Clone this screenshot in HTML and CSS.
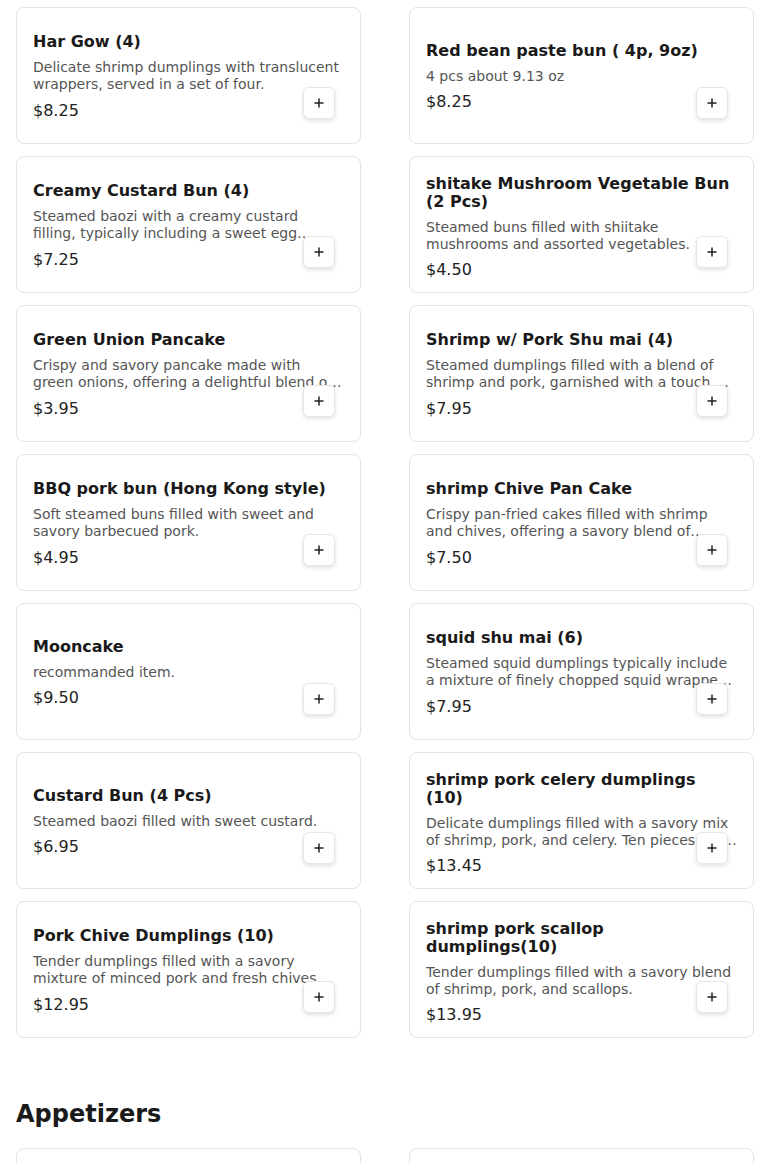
FILE: index.html
```html
<!DOCTYPE html>
<html lang="en">
<head>
<meta charset="utf-8">
<title>Menu</title>
<link rel="stylesheet" href="styles.css">
</head>
<body>
<main class="page">
  <section class="section">
    <div class="grid">
      <div class="card"><div class="info"><h3 class="name">Har Gow (4)</h3><p class="desc">Delicate shrimp dumplings with translucent wrappers, served in a set of four.</p><div class="price">$8.25</div></div><button class="add" aria-label="Add"><svg viewBox="0 0 10 10" width="10" height="10"><path d="M5 0.5v9M0.5 5h9" stroke="#222" stroke-width="1.5" fill="none"/></svg></button></div>
      <div class="card"><div class="info"><h3 class="name">Red bean paste bun ( 4p, 9oz)</h3><p class="desc">4 pcs about 9.13 oz</p><div class="price">$8.25</div></div><button class="add" aria-label="Add"><svg viewBox="0 0 10 10" width="10" height="10"><path d="M5 0.5v9M0.5 5h9" stroke="#222" stroke-width="1.5" fill="none"/></svg></button></div>
      <div class="card"><div class="info"><h3 class="name">Creamy Custard Bun (4)</h3><p class="desc">Steamed baozi with a creamy custard filling, typically including a sweet egg custard mixture.</p><div class="price">$7.25</div></div><button class="add" aria-label="Add"><svg viewBox="0 0 10 10" width="10" height="10"><path d="M5 0.5v9M0.5 5h9" stroke="#222" stroke-width="1.5" fill="none"/></svg></button></div>
      <div class="card"><div class="info"><h3 class="name">shitake Mushroom Vegetable Bun (2 Pcs)</h3><p class="desc">Steamed buns filled with shiitake mushrooms and assorted vegetables.</p><div class="price">$4.50</div></div><button class="add" aria-label="Add"><svg viewBox="0 0 10 10" width="10" height="10"><path d="M5 0.5v9M0.5 5h9" stroke="#222" stroke-width="1.5" fill="none"/></svg></button></div>
      <div class="card"><div class="info"><h3 class="name">Green Union Pancake</h3><p class="desc">Crispy and savory pancake made with green onions, offering a delightful blend of flavors and textures.</p><div class="price">$3.95</div></div><button class="add" aria-label="Add"><svg viewBox="0 0 10 10" width="10" height="10"><path d="M5 0.5v9M0.5 5h9" stroke="#222" stroke-width="1.5" fill="none"/></svg></button></div>
      <div class="card"><div class="info"><h3 class="name">Shrimp w/ Pork Shu mai (4)</h3><p class="desc">Steamed dumplings filled with a blend of shrimp and pork, garnished with a touch of roe.</p><div class="price">$7.95</div></div><button class="add" aria-label="Add"><svg viewBox="0 0 10 10" width="10" height="10"><path d="M5 0.5v9M0.5 5h9" stroke="#222" stroke-width="1.5" fill="none"/></svg></button></div>
      <div class="card"><div class="info"><h3 class="name">BBQ pork bun (Hong Kong style)</h3><p class="desc">Soft steamed buns filled with sweet and savory barbecued pork.</p><div class="price">$4.95</div></div><button class="add" aria-label="Add"><svg viewBox="0 0 10 10" width="10" height="10"><path d="M5 0.5v9M0.5 5h9" stroke="#222" stroke-width="1.5" fill="none"/></svg></button></div>
      <div class="card"><div class="info"><h3 class="name">shrimp Chive Pan Cake</h3><p class="desc">Crispy pan-fried cakes filled with shrimp and chives, offering a savory blend of flavors.</p><div class="price">$7.50</div></div><button class="add" aria-label="Add"><svg viewBox="0 0 10 10" width="10" height="10"><path d="M5 0.5v9M0.5 5h9" stroke="#222" stroke-width="1.5" fill="none"/></svg></button></div>
      <div class="card"><div class="info"><h3 class="name">Mooncake</h3><p class="desc">recommanded item.</p><div class="price">$9.50</div></div><button class="add" aria-label="Add"><svg viewBox="0 0 10 10" width="10" height="10"><path d="M5 0.5v9M0.5 5h9" stroke="#222" stroke-width="1.5" fill="none"/></svg></button></div>
      <div class="card"><div class="info"><h3 class="name">squid shu mai (6)</h3><p class="desc">Steamed squid dumplings typically include a mixture of finely chopped squid wrapped in thin dough.</p><div class="price">$7.95</div></div><button class="add" aria-label="Add"><svg viewBox="0 0 10 10" width="10" height="10"><path d="M5 0.5v9M0.5 5h9" stroke="#222" stroke-width="1.5" fill="none"/></svg></button></div>
      <div class="card"><div class="info"><h3 class="name">Custard Bun (4 Pcs)</h3><p class="desc">Steamed baozi filled with sweet custard.</p><div class="price">$6.95</div></div><button class="add" aria-label="Add"><svg viewBox="0 0 10 10" width="10" height="10"><path d="M5 0.5v9M0.5 5h9" stroke="#222" stroke-width="1.5" fill="none"/></svg></button></div>
      <div class="card"><div class="info"><h3 class="name">shrimp pork celery dumplings (10)</h3><p class="desc">Delicate dumplings filled with a savory mix of shrimp, pork, and celery. Ten pieces per order.</p><div class="price">$13.45</div></div><button class="add" aria-label="Add"><svg viewBox="0 0 10 10" width="10" height="10"><path d="M5 0.5v9M0.5 5h9" stroke="#222" stroke-width="1.5" fill="none"/></svg></button></div>
      <div class="card"><div class="info"><h3 class="name">Pork Chive Dumplings (10)</h3><p class="desc">Tender dumplings filled with a savory mixture of minced pork and fresh chives.</p><div class="price">$12.95</div></div><button class="add" aria-label="Add"><svg viewBox="0 0 10 10" width="10" height="10"><path d="M5 0.5v9M0.5 5h9" stroke="#222" stroke-width="1.5" fill="none"/></svg></button></div>
      <div class="card"><div class="info"><h3 class="name">shrimp pork scallop dumplings(10)</h3><p class="desc">Tender dumplings filled with a savory blend of shrimp, pork, and scallops.</p><div class="price">$13.95</div></div><button class="add" aria-label="Add"><svg viewBox="0 0 10 10" width="10" height="10"><path d="M5 0.5v9M0.5 5h9" stroke="#222" stroke-width="1.5" fill="none"/></svg></button></div>
    </div>
  </section>
  <section class="section">
    <h2 class="section-title">Appetizers</h2>
    <div class="grid">
      <div class="card"><div class="info"><h3 class="name">Spring Rolls (2)</h3><p class="desc">Crispy rolls filled with vegetables.</p><div class="price">$3.95</div></div></div>
      <div class="card"><div class="info"><h3 class="name">Fried Wonton</h3><p class="desc">Crispy fried wontons.</p><div class="price">$5.95</div></div></div>
    </div>
  </section>
</main>
</body>
</html>
```
FILE: styles.css
```css
* { box-sizing: border-box; }
html, body { margin: 0; padding: 0; background: #fff; }
body {
  font-family: "DejaVu Sans", "Liberation Sans", sans-serif;
  color: #1a1a1a;
}
.page { padding: 7px 16px 40px; }
.grid {
  display: grid;
  grid-template-columns: 1fr 1fr;
  column-gap: 48px;
  row-gap: 12px;
}
.card {
  position: relative;
  height: 137px;
  border: 1px solid #e3e3e3;
  border-radius: 8px;
  padding: 18px 16px 16px;
  display: flex;
  flex-direction: column;
  background: #fff;
}
.info {
  margin: auto 0;
  display: flex;
  flex-direction: column;
}
.name {
  margin: 0 0 8px;
  font-size: 16px;
  font-weight: bold;
  color: #1a1a1a;
  line-height: 18px;
}
.desc {
  margin: 0 0 7.5px;
  font-size: 14px;
  color: #555;
  line-height: 1.2;
  display: -webkit-box;
  -webkit-line-clamp: 2;
  -webkit-box-orient: vertical;
  overflow: hidden;
}
.price { font-size: 16px; color: #222; line-height: normal; }
.add {
  position: absolute;
  right: 25px;
  bottom: 24px;
  width: 32px;
  height: 32px;
  padding: 0;
  border: 1px solid #e6e6e6;
  border-radius: 6px;
  background: #fff;
  box-shadow: 0 2px 4px rgba(0,0,0,0.12);
  display: flex;
  align-items: center;
  justify-content: center;
  cursor: pointer;
}
.section-title {
  margin: 62px 0 20px;
  font-size: 24px;
  font-weight: bold;
  line-height: normal;
  color: #1a1a1a;
}
```
